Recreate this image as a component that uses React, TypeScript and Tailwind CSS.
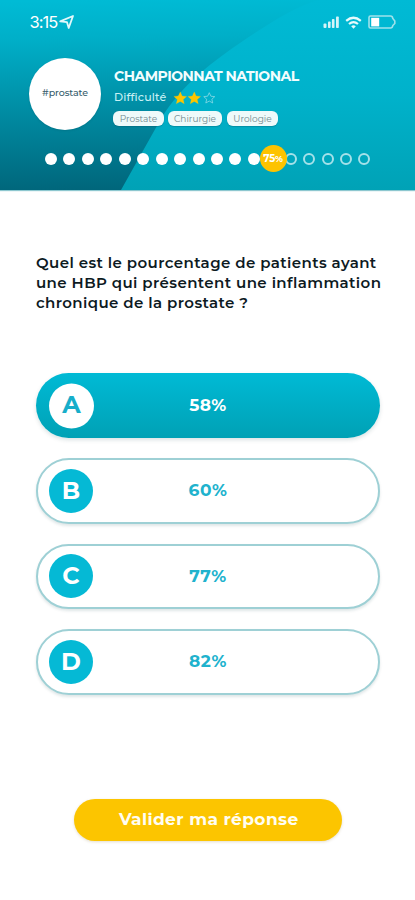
const answers = [
  { letter: "A", value: "58%", selected: true },
  { letter: "B", value: "60%", selected: false },
  { letter: "C", value: "77%", selected: false },
  { letter: "D", value: "82%", selected: false },
];

const STAR = "M7 .8 8.9 4.9 13.4 5.4 10 8.4 11 12.8 7 10.5 3 12.8 4 8.4.6 5.4 5.1 4.9Z";

function Star({ filled }: { filled: boolean }) {
  return (
    <svg className="h-[14px] w-[14.5px] shrink-0" viewBox="0 0 14 14" strokeLinejoin="round">
      <path
        d={STAR}
        transform={filled ? undefined : "translate(1 1) scale(.86)"}
        fill={filled ? "#fdc500" : "none"}
        stroke={filled ? "#fdc500" : "#8fdbe6"}
        strokeWidth={filled ? 0.2 : 0.9}
      />
    </svg>
  );
}

function HeaderBackdrop() {
  return (
    <svg className="absolute inset-0 h-[190px] w-full" viewBox="0 0 415 190" preserveAspectRatio="none">
      <defs>
        <linearGradient id="deep" gradientUnits="userSpaceOnUse" x1="80" y1="0" x2="84" y2="190">
          <stop offset="0" stopColor="#00bbd5" />
          <stop offset="0.2" stopColor="#00afc8" />
          <stop offset="0.6" stopColor="#008aa1" />
          <stop offset="1" stopColor="#00667b" />
        </linearGradient>
        <linearGradient id="light" x1="0" y1="0" x2="0" y2="1">
          <stop offset="0" stopColor="#00bad5" />
          <stop offset="0.5" stopColor="#00b2cb" />
          <stop offset="1" stopColor="#00a2b6" />
        </linearGradient>
      </defs>
      <rect width="415" height="190" fill="url(#deep)" />
      <path d="M121 190 158 124C176 91 206 66 240 43C265 26 292 8 318 0H415V190Z" fill="url(#light)" />
    </svg>
  );
}

function StatusBar() {
  return (
    <div className="flex h-[44px] items-center pl-[29.5px] pr-[18px] text-white">
      <span className="w-[29.5px] font-['Inter',sans-serif] text-[16.5px] leading-none tracking-[-1px]">3:15</span>
      <svg className="h-[16px] w-[16px]" viewBox="0 0 16 16" fill="none" stroke="#e2f8fb" strokeWidth="1.8" strokeLinejoin="round">
        <path d="M1.2 7.4 14 2 9.7 14 8 8.2Z" />
      </svg>
      <svg className="ml-auto h-[12px] w-[17px]" viewBox="0 0 17 12" fill="#d5f4f8">
        <rect x="0.5" y="7.5" width="3" height="4.5" rx="1" />
        <rect x="5" y="5.5" width="2.6" height="6.5" rx="0.8" />
        <rect x="8.9" y="3" width="2.6" height="9" rx="0.8" />
        <rect x="13" y="0.5" width="2.8" height="11.5" rx="0.8" />
      </svg>
      <svg className="ml-[5px] h-[13px] w-[17px]" viewBox="0 0 17 13" fill="none" stroke="#e6fafc" strokeWidth="2.2">
        <path d="M1.2 4.8Q8.5-1.3 15.8 4.8" />
        <path d="M4 8Q8.5 4.2 13 8" />
        <path d="M6.2 10.2Q8.5 8.4 10.8 10.2L8.5 12.7Z" fill="#e6fafc" stroke="none" />
      </svg>
      <svg className="ml-[6px] mr-px h-[14px] w-[28px]" viewBox="0 0 28 14">
        <path d="M1 2.5Q1 1 2.5 1H22.5Q24.5 1 24.8 3.5L26.8 6V8.5L24.8 10.5Q24.5 13 22.5 13H2.5Q1 13 1 11.5Z" fill="none" stroke="#9fe2eb" strokeWidth="1.6" />
        <rect x="3.2" y="2.8" width="8" height="8.6" fill="#fff" />
      </svg>
    </div>
  );
}

function Tag({ label, className }: { label: string; className: string }) {
  return (
    <span className={`flex h-[15px] items-center justify-center rounded-[6px] bg-[#eefafa] text-[9px] leading-none text-[#71898e] shadow-[0_1px_1px_rgba(0,80,95,0.3)] ${className}`}>
      {label}
    </span>
  );
}

function Progress() {
  return (
    <div className="relative ml-[45px] mt-[23px] flex h-[12px] w-[325.5px] items-center justify-between">
      {Array.from({ length: 12 }, (_, i) => (
        <span key={i} className="size-[12px] rounded-full bg-white" />
      ))}
      <span className="size-[12px]" />
      {Array.from({ length: 5 }, (_, i) => (
        <span key={i} className="size-[12px] rounded-full border-2 border-[#a5e1e9]" />
      ))}
      <span className="absolute left-[214.5px] top-[-8px] flex size-[27px] items-center justify-center rounded-full bg-[#fdc300] text-[10px] font-bold leading-none tracking-[-0.2px] text-white">
        75<span className="text-[9px]">%</span>
      </span>
    </div>
  );
}

export default function App() {
  return (
    <main className="flex h-[900px] w-[415px] flex-col overflow-hidden bg-white font-['Montserrat','Inter',sans-serif]">
      <header className="relative h-[190px] shrink-0 shadow-[0_1px_1px_#8dc7cf]">
        <HeaderBackdrop />
        <div className="relative">
          <StatusBar />
          <div className="ml-[29px] mt-[14px] flex h-[72px] gap-[12px]">
            <div className="flex size-[72px] items-center justify-center rounded-full bg-white text-[9.5px] font-medium text-[#365c6c] shadow-[0_1px_2px_rgba(0,90,105,0.3)]">
              <span className="mt-[-2px] tracking-[-0.1px]">#prostate</span>
            </div>
            <div className="flex flex-col pt-[9px]">
              <h1 className="ml-px w-[190px] whitespace-nowrap text-[14px] font-bold leading-[18px] tracking-[-0.5px] text-[#f2fdfe]">CHAMPIONNAT NATIONAL</h1>
              <div className="ml-[1px] mt-[5px] flex h-[15px] items-center">
                <span className="w-[58.5px] text-[11px] font-medium tracking-[0.15px] text-[#c9f1f5]">Difficulté</span>
                <Star filled />
                <Star filled />
                <Star filled={false} />
              </div>
              <div className="mt-[6px] flex">
                <Tag label="Prostate" className="w-[51px]" />
                <Tag label="Chirurgie" className="ml-[4px] w-[54px]" />
                <Tag label="Urologie" className="ml-[5px] w-[51px]" />
              </div>
            </div>
          </div>
          <Progress />
        </div>
      </header>

      <h2 className="ml-[36px] mt-[63px] whitespace-nowrap text-[15px] font-semibold leading-[20px] tracking-[0.4px] text-[#0d1a1f]">
        <span className="block">Quel est le pourcentage de patients ayant</span>
        <span className="block">une HBP qui présentent une inflammation</span>
        <span className="block">chronique de la prostate ?</span>
      </h2>

      <div className="ml-[36px] mt-[60px] flex w-[344px] flex-col gap-[20px]">
        {answers.map(({ letter, value, selected }) => (
          <button
            key={letter}
            className={`relative flex h-[65.4px] items-center justify-center rounded-full ${
              selected
                ? "bg-linear-to-b from-[#00bad5] to-[#00a1b5] text-white shadow-[0_2px_4px_rgba(0,60,70,0.15)]"
                : "border-2 border-[#9ed0d5] bg-white text-[#20b2cd] shadow-[0_2px_3px_rgba(0,60,70,0.13)]"
            }`}
          >
            <span
              className={`absolute top-1/2 flex -translate-y-1/2 items-center justify-center rounded-full text-[24px] font-bold leading-none ${
                selected ? "left-[13px] size-[45px] bg-white pb-[2px] text-[#17aeca]" : "left-[11px] size-[44px] bg-[#05b9d5] text-white"
              }`}
            >
              {letter}
            </span>
            <span className="text-[17px] font-bold tracking-[0.5px]">{value}</span>
          </button>
        ))}
      </div>

      <button className="ml-[74px] mt-[104px] flex h-[42px] w-[268px] items-center justify-center rounded-full bg-[#fcc500] pl-[1.5px] text-[17px] font-bold tracking-[0.4px] text-[#fffdf2] shadow-[0_1px_3px_rgba(120,90,0,0.2)]">
        Valider ma réponse
      </button>
    </main>
  );
}
